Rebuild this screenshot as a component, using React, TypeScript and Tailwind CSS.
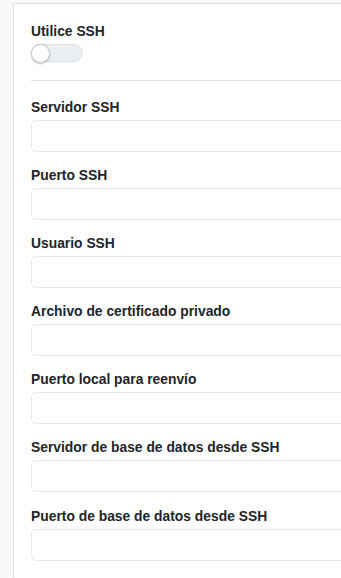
const fields = [
  "Servidor SSH",
  "Puerto SSH",
  "Usuario SSH",
  "Archivo de certificado privado",
  "Puerto local para reenvío",
  "Servidor de base de datos desde SSH",
  "Puerto de base de datos desde SSH",
];

export default function App() {
  return (
    <div
      className="h-[578px] w-[341px] overflow-hidden bg-[#f8f9fa] pl-[13px] pt-[3px]"
      style={{ fontFamily: '"Liberation Sans", Arial, sans-serif' }}
    >
      <div className="h-[577px] rounded-bl-[4px] border-b border-l border-t border-[#dcdfe3] bg-white pl-[17px] pt-[18px]">
        {/* SSH toggle */}
        <div className="text-[13.85px] font-bold leading-[18px] text-[#212529]">Utilice SSH</div>
        <div className="mt-[4px] flex h-[18px] w-[52px] items-center rounded-full border border-[#dde2e6] bg-[#eceff2]">
          <div className="-ml-px h-[19px] w-[19px] rounded-full border border-[#c9ced3] bg-white shadow-[0_1px_2px_rgba(0,0,0,0.25)]" />
        </div>
        <div className="mt-[18px] h-px bg-[#dedede]" />

        {/* Fields */}
        <div className="mt-[17px] flex flex-col gap-[14.1px]">
          {fields.map((f) => (
            <div key={f} className="flex flex-col">
              <label className="text-[13.85px] font-bold leading-[18px] text-[#212529]">{f}</label>
              <div className="mt-[4px] h-[32px] rounded-l-[5px] border border-r-0 border-[#e9eaec] bg-white" />
            </div>
          ))}
        </div>
      </div>
    </div>
  );
}
